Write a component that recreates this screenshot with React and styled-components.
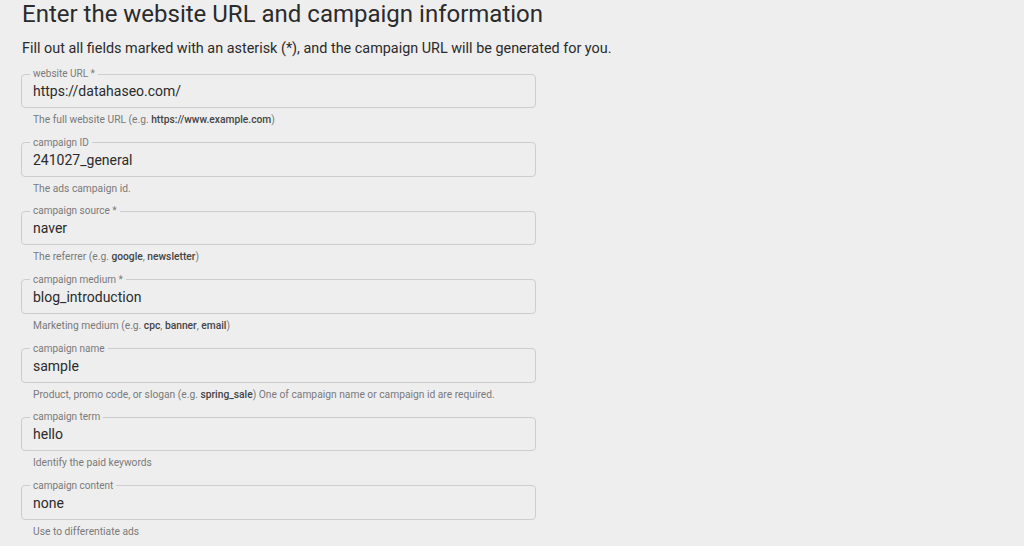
import styled, { createGlobalStyle } from "styled-components"

const GlobalStyle = createGlobalStyle`
    html, body {
        margin: 0;
        padding: 0;
        background: #eeeeee;
        font-family: Roboto, "Liberation Sans", sans-serif;
    }
`

const Page = styled.div`
    width: 1024px;
    height: 546px;
    overflow: hidden;
    padding: 0 22px;
    box-sizing: border-box;
`
const Title = styled.h2`
    margin: 0;
    padding-top: 0;
    font-size: 24px;
    line-height: 28px;
    font-weight: 400;
    color: #2b2b2b;
`
const Intro = styled.p`
    margin: 11px 0 9px;
    font-size: 14.4px;
    line-height: 20px;
    color: #2b2b2b;
`
const Form = styled.form`
    display: flex;
    flex-direction: column;
    width: 515px;
    margin-left: -1px;
`
const Field = styled.fieldset`
    margin: 0;
    padding: 0 11px 6px;
    border: 1px solid #cdcdcd;
    border-radius: 4px;
    min-width: 0;
`
const Label = styled.legend`
    padding: 0 3px;
    margin-left: -3px;
    font-size: 10px;
    line-height: 12px;
    color: #7a7a7a;
`
const Input = styled.input`
    display: block;
    width: 100%;
    box-sizing: border-box;
    height: 20px;
    margin-top: 1px;
    padding: 0;
    border: 0;
    outline: none;
    background: transparent;
    font-family: inherit;
    font-size: 14px;
    color: #2b2b2b;
`
const Help = styled.div`
    margin: 6px 0 10.67px 12px;
    font-size: 10.25px;
    line-height: 12px;
    color: #7a7a7a;

    b {
        font-weight: 500;
        color: #444;
    }
`

const fields = [
    { label: "website URL *", value: "https://datahaseo.com/", help: <>The full website URL (e.g. <b>https://www.example.com</b>)</> },
    { label: "campaign ID", value: "241027_general", help: <>The ads campaign id.</> },
    { label: "campaign source *", value: "naver", help: <>The referrer (e.g. <b>google</b>, <b>newsletter</b>)</> },
    { label: "campaign medium *", value: "blog_introduction", help: <>Marketing medium (e.g. <b>cpc</b>, <b>banner</b>, <b>email</b>)</> },
    { label: "campaign name", value: "sample", help: <>Product, promo code, or slogan (e.g. <b>spring_sale</b>) One of campaign name or campaign id are required.</> },
    { label: "campaign term", value: "hello", help: <>Identify the paid keywords</> },
    { label: "campaign content", value: "none", help: <>Use to differentiate ads</> },
]

const App = () => {
    return (
        <Page>
            <GlobalStyle />
            <Title>Enter the website URL and campaign information</Title>
            <Intro>Fill out all fields marked with an asterisk (*), and the campaign URL will be generated for you.</Intro>
            <Form>
                {fields.map((f) => (
                    <div key={f.label}>
                        <Field>
                            <Label>{f.label}</Label>
                            <Input defaultValue={f.value} />
                        </Field>
                        <Help>{f.help}</Help>
                    </div>
                ))}
            </Form>
        </Page>
    )
}

export default App
